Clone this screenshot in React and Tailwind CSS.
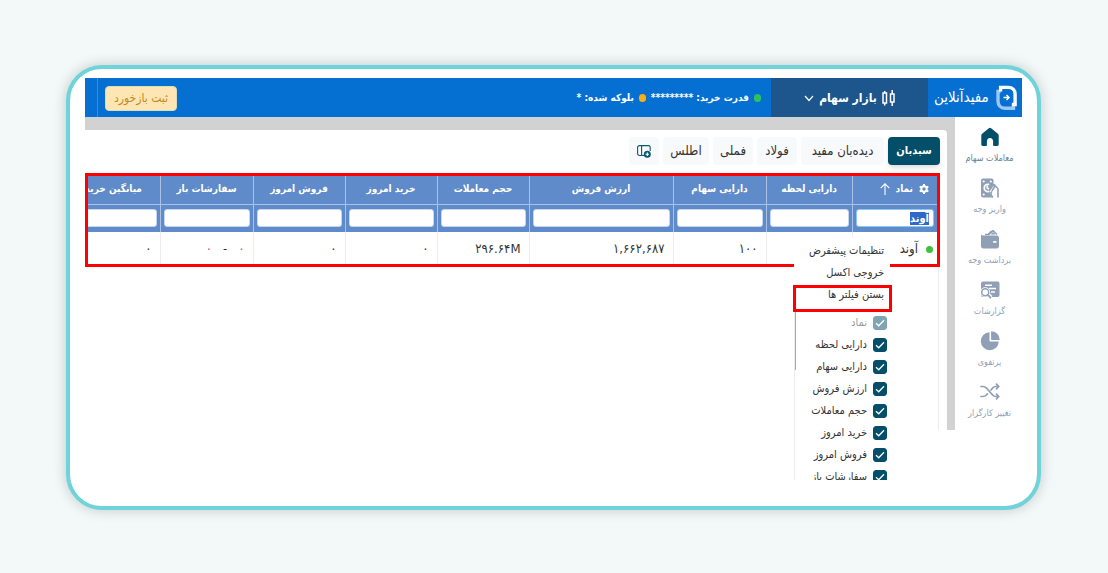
import { useEffect, useRef, useState } from 'react';

const sidebarItems = [
  { label: 'معاملات سهام', icon: 'home', active: true },
  { label: 'واریز وجه', icon: 'deposit' },
  { label: 'برداشت وجه', icon: 'wallet' },
  { label: 'گزارشات', icon: 'report' },
  { label: 'پرتفوی', icon: 'pie' },
  { label: 'تغییر کارگزار', icon: 'shuffle' }
];

const tabs = [
  { label: 'سبدبان', width: 'w-[52px]' },
  { label: 'دیده‌بان مفید', width: 'w-[83px]' },
  { label: 'فولاد', width: 'w-[40px]' },
  { label: 'فملی', width: 'w-[40px]' },
  { label: 'اطلس', width: 'w-[46px]' }
];

const columns = [
  { label: 'نماد', width: 'w-[85px]' },
  { label: 'دارایی لحظه', width: 'w-[86px]', value: '' },
  { label: 'دارایی سهام', width: 'w-[93px]', value: '۱۰۰' },
  { label: 'ارزش فروش', width: 'w-[144px]', value: '۱,۶۶۲,۶۸۷' },
  { label: 'حجم معاملات', width: 'w-[92px]', value: '۲۹۶.۶۴M' },
  { label: 'خرید امروز', width: 'w-[92px]', value: '۰' },
  { label: 'فروش امروز', width: 'w-[92px]', value: '۰' },
  { label: 'سفارشات باز', width: 'w-[93px]', orders: true },
  { label: 'میانگین خرید', width: 'w-[93px]', value: '۰' }
];

const menuColumns = [
  'نماد',
  'دارایی لحظه',
  'دارایی سهام',
  'ارزش فروش',
  'حجم معاملات',
  'خرید امروز',
  'فروش امروز',
  'سفارشات باز'
];

function SidebarIcon({ name }) {
  if (name === 'home') {
    return (
      <svg className="w-5 h-5" viewBox="0 0 20 20" fill="currentColor">
        <path d="M8.9 1.2a1.8 1.8 0 0 1 2.2 0l6.800 5.600c.5.4.8 1 .8 1.600v9.200c0 .8-.6 1.400-1.400 1.400h-3.400c-.5 0-.8-.3-.8-.8V14c0-1.700-1.300-3.100-3.100-3.100S6.900 12.300 6.900 14v4.200c0 .5-.3.800-.8.800H2.700c-.8 0-1.400-.6-1.400-1.400V8.400c0-.6.3-1.200.8-1.600z" />
      </svg>
    );
  }
  if (name === 'deposit') {
    return (
      <svg className="w-5 h-5" viewBox="0 0 20 20" fill="none">
        <rect x="1" y=".5" width="12.500" height="19" rx="2" fill="currentColor" />
        <circle cx="3.700" cy="3.500" r="1.100" fill="#fff" />
        <circle cx="10.800" cy="3.500" r="1.100" fill="#fff" />
        <circle cx="3.700" cy="16.500" r="1.100" fill="#fff" />
        <path stroke="#fff" strokeWidth="1.700" strokeLinecap="round" d="M8.500 6.400a3.600 3.600 0 1 0 .3 7M7.500 8.300c-1.200 1.500.2 1.800 1.200 2.600" />
        <path fill="#fff" d="M10 12.500l4-6.500 5 4.500V20h-6.500L10 15.500z" />
        <path stroke="currentColor" strokeWidth="1.600" strokeLinecap="round" strokeLinejoin="round" d="M9.500 12l3.800-5c.8-1 2.300.1 1.600 1.200l-2.700 4.300M14.700 7.300l2.300 2.200c.7.600 1 1.300 1 2.200V19M11.500 14c-.9 1.200-.8 2.300 0 3.400l1 1.600" />
      </svg>
    );
  }
  if (name === 'wallet') {
    return (
      <svg className="w-5 h-5" viewBox="0 0 20 20" fill="none">
        <path stroke="currentColor" strokeWidth="1.500" strokeLinejoin="round" d="M5 5.500h4l4-4 4 4M8 5.500l3.500-3.500M11.500 5.500L13 4l1.500 1.500" />
        <path fill="currentColor" d="M1 5.200c.5 1 1.500 1.300 3 1.300h12.500C18 6.500 19 7.500 19 9v8.300c0 1.200-1 2.200-2.200 2.200H3.200C2 19.500 1 18.500 1 17.300z" />
        <rect x="13" y="12" width="3.600" height="1.800" rx=".9" fill="#fff" />
      </svg>
    );
  }
  if (name === 'report') {
    return (
      <svg className="w-5 h-5" viewBox="0 0 20 20" fill="none">
        <rect x="1" y="1.500" width="18.500" height="15.500" rx="2" fill="currentColor" />
        <path stroke="#fff" strokeWidth="1.400" d="M5 5.200h7M9 8.500h7M11 12h4" />
        <circle cx="5.200" cy="12.200" r="5" fill="#fff" />
        <circle cx="5.200" cy="12.200" r="3.500" stroke="currentColor" strokeWidth="1.500" />
        <path stroke="#fff" strokeWidth="4" d="M8.500 14.900L11 17.500" />
        <path stroke="currentColor" strokeWidth="1.800" strokeLinecap="round" d="M7.900 14.800L10.500 17.700" />
      </svg>
    );
  }
  if (name === 'pie') {
    return (
      <svg className="w-5 h-5" viewBox="0 0 20 20" fill="currentColor">
        <path d="M9.500 1.200v8.300c0 .6.400 1 1 1h8.300A9 9 0 1 1 9.500 1.200z" />
        <path d="M11.700.3a8.600 8.600 0 0 1 8 8.200c0 .4-.2.600-.6.600h-7.300c-.4 0-.7-.3-.7-.7V.800c0-.3.200-.5.600-.5z" />
      </svg>
    );
  }
  return (
    <svg className="w-5 h-5" viewBox="0 0 20 20" fill="none" stroke="currentColor" strokeWidth="1.700" strokeLinecap="round" strokeLinejoin="round">
      <path d="M1 4.500h2c1.300 0 2.300.5 3.400 1.500l6.200 7c.8 1 1.800 1.500 3.100 1.500h2.800M1 14.500h2c1.300 0 2.500-.5 3.400-1.500l1-1.100M11 8l1.600-2c.8-1 1.800-1.500 3.100-1.500h2.800M16.500 2.200l2.300 2.300-2.300 2.300M16.500 12.200l2.300 2.300-2.300 2.300" />
    </svg>
  );
}

function Header() {
  return (
    <header className="flex h-[39px] bg-[#0570d1] text-white">
      <a href="#" className="flex w-[94px] items-center justify-between pr-[5px] pl-[6px]">
        <svg className="w-[21px] h-[26px]" viewBox="0 0 21 26" fill="none">
          <path stroke="#9cc7f0" strokeWidth="3.400" d="M4.500 6.500H2V16c0 4.200 2.500 7.300 7 7.300h8.500v-2.500" />
          <path stroke="#fff" strokeWidth="3.400" d="M4.600 6.500V2.400h7.600c4.200 0 6.900 2.600 6.900 6.800v10.300h-3.300" />
          <path stroke="#fff" strokeWidth="1.500" d="M7.500 12.500H13M10.500 10l2.500 2.500-2.500 2.500" />
        </svg>
        <span className="text-[15px] whitespace-nowrap">مفیدآنلاین</span>
      </a>
      <button type="button" className="flex w-[157px] items-center justify-center gap-[5px] bg-[#1d558d] text-xs font-bold">
        <svg className="w-[13px] h-4" viewBox="0 0 13 16" fill="none" stroke="currentColor" strokeWidth="1.500">
          <rect x="1" y="3" width="3.500" height="10" />
          <rect x="8.500" y="4" width="3.500" height="8" />
          <path d="M2.700 1v2M2.700 13v2.500M10.200 0v4M10.200 12v4" />
        </svg>
        <span>بازار سهام</span>
        <svg className="w-[10px] h-[10px]" viewBox="0 0 10 10" fill="none" stroke="currentColor" strokeWidth="1.200">
          <path d="M1 3l4 4.500L9 3" />
        </svg>
      </button>
      <div className="flex flex-1 items-center gap-[5px] pr-[10px] text-[10px] font-bold">
        <span className="h-2 w-[7px] rounded-full bg-[#2dc25b]" />
        <span>قدرت خرید: *********</span>
        <span className="h-2 w-[7px] rounded-full bg-[#fcb010]" />
        <span>بلوکه شده: *</span>
      </div>
      <div className="flex items-center border-l border-[#3b8bdd] pt-px pl-[7px]">
        <button type="button" className="h-[25px] w-[72px] rounded-sm border border-[#d9dcb8] bg-[#fee6b4] text-xs text-[#c28a1c]">
          ثبت بازخورد
        </button>
      </div>
      <div className="w-3" />
    </header>
  );
}

function Sidebar() {
  return (
    <nav className="w-[67px] shrink-0 pt-[7px] pl-[2px]">
      {sidebarItems.map((item) => (
        <a
          key={item.label}
          href="#"
          className={`flex h-[51px] flex-col items-center pt-[3px] ${item.active ? 'text-[#034e68]' : 'text-[#8f9fb5]'}`}
        >
          <SidebarIcon name={item.icon} />
          <span className={`mt-[3px] text-[9px] leading-[16px] whitespace-nowrap ${item.active ? 'text-[#66838f]' : ''}`}>
            {item.label}
          </span>
        </a>
      ))}
    </nav>
  );
}

function Tabs() {
  return (
    <div className="flex gap-1 pt-[7px] pr-[7px] text-xs text-[#333]">
      {tabs.map((tab, index) => (
        <button
          key={tab.label}
          type="button"
          className={`h-[28px] shrink-0 rounded-sm whitespace-nowrap ${tab.width} ${
            index === 0 ? 'bg-[#034e68] text-[11px] font-bold text-white shadow-md' : 'bg-[#f8f9fb] text-[13px]'
          }`}
        >
          {tab.label}
        </button>
      ))}
      <button type="button" aria-label="افزودن دیده‌بان" className="flex h-[28px] w-[30px] items-center justify-center rounded-sm bg-[#f8f9fb] text-[#0b5872]">
        <svg className="w-[14px] h-[13px]" viewBox="0 0 14 13" fill="none" stroke="currentColor" strokeWidth="1.100">
          <path d="M7 10.500H2.500C1.400 10.500.6 9.700.6 8.600V2.500C.6 1.400 1.400.6 2.500.6h8.800c1.100 0 1.900.8 1.900 1.900v3.500M4.600.6v9.900" />
          <circle cx="10.300" cy="9.200" r="3.500" fill="currentColor" stroke="none" />
          <path stroke="#fff" d="M10.300 7.500v3.400M8.600 9.200h3.400" />
        </svg>
      </button>
    </div>
  );
}

function ColumnMenu() {
  return (
    <div className="absolute top-[61px] right-[47px] w-[96px] bg-white text-[11px] text-[#333]">
      <ul className="h-[75px] pt-[3px]">
        <li>
          <button type="button" className="block h-[22px] w-full pr-[6px] text-right whitespace-nowrap">تنظیمات پیشفرض</button>
        </li>
        <li>
          <button type="button" className="block h-[22px] w-full pr-[6px] text-right whitespace-nowrap">خروجی اکسل</button>
        </li>
        <li className="relative">
          <button type="button" className="block h-[22px] w-full pr-[6px] text-right whitespace-nowrap">بستن فیلتر ها</button>
          <span className="absolute top-px -right-[2px] -left-px h-[27px] border-3 border-[#fe0000]" />
        </li>
      </ul>
      <ul className="relative h-[168px] overflow-hidden border-l border-[#ececec]">
        {menuColumns.map((name, index) => (
          <li key={name} className="h-[22px]">
            <label className={`flex h-full items-center gap-[6px] pr-[3px] whitespace-nowrap ${index === 0 ? 'opacity-50' : ''}`}>
              <span className="relative flex h-[14px] w-[14px] shrink-0">
                <input
                  type="checkbox"
                  defaultChecked
                  disabled={index === 0}
                  className="h-[14px] w-[14px] appearance-none rounded-[3px] border border-[#034e68] checked:bg-[#034e68]"
                />
                <svg className="pointer-events-none absolute inset-0" viewBox="0 0 14 14" fill="none" stroke="#fff" strokeWidth="1.300">
                  <path d="M3 7.200l2.700 2.600L11 4.300" />
                </svg>
              </span>
              {name}
            </label>
          </li>
        ))}
        <li className="absolute top-0 left-0 h-[58px] w-px bg-[#aaa]" />
      </ul>
    </div>
  );
}

function PortfolioTable() {
  const [symbol, setSymbol] = useState('آوند');
  const symbolRef = useRef(null);

  useEffect(() => {
    symbolRef.current?.focus();
    symbolRef.current?.select();
  }, []);

  return (
    <div className="relative mt-2 mr-[7px] border-3 border-[#fe0000]">
      <div className="overflow-hidden">
        <table className="w-[calc(100%+20px)] table-fixed border-collapse text-[#333]">
          <thead className="bg-[#5f8bca] text-white">
            <tr className="h-[28px] text-[10px]">
              {columns.map((column, index) => (
                <th key={column.label} className={`border-b border-l border-[#a9c2e6] p-0 pb-[2px] whitespace-nowrap ${column.width}`}>
                  {index === 0 ? (
                    <div className="flex items-center justify-start gap-[6px] pr-2">
                      <svg className="w-[10px] h-[10px]" viewBox="0 0 10 10" fill="none" stroke="currentColor">
                        <circle cx="5" cy="5" r="2.700" strokeWidth="2" />
                        <path strokeWidth="2" d="M5 0v2M5 8v2M.7 2.500l1.600 1M7.700 6.500l1.600 1M.7 7.500l1.600-1M7.700 3.500l1.600-1" />
                      </svg>
                      <span>{column.label}</span>
                      <svg className="w-[10px] h-3" viewBox="0 0 10 12" fill="none" stroke="currentColor" strokeWidth="1.100">
                        <path d="M5 12V1M.7 5.200L5 .9l4.300 4.300" />
                      </svg>
                    </div>
                  ) : (
                    column.label
                  )}
                </th>
              ))}
            </tr>
            <tr className="h-[28px]">
              {columns.map((column, index) => (
                <td key={column.label} className="border-l border-[#a9c2e6] px-[3px] py-0">
                  {index === 0 ? (
                    <input
                      ref={symbolRef}
                      type="text"
                      aria-label={column.label}
                      value={symbol}
                      onChange={(e) => setSymbol(e.target.value)}
                      className="block h-[18px] w-full rounded-[3px] border border-[#8ec5f7] bg-white px-1 text-[11px] font-bold text-[#333] outline-none selection:bg-[#2f68c8] selection:text-white"
                    />
                  ) : (
                    <input
                      type="text"
                      aria-label={column.label}
                      className="block h-[18px] w-full rounded-[3px] border border-[#c4d6f0] bg-white px-1 text-[11px] text-[#333] outline-none"
                    />
                  )}
                </td>
              ))}
            </tr>
          </thead>
          <tbody>
            <tr className="h-[32px] text-[13px]">
              {columns.map((column, index) => (
                <td key={column.label} className="border-l border-[#ececec] px-2 pt-[2px] pb-0 whitespace-nowrap">
                  {index === 0 && (
                    <div className="-mr-1 flex items-center gap-2">
                      <span className="h-[7px] w-[7px] rounded-full bg-[#3cc23c]" />
                      آوند
                    </div>
                  )}
                  {column.value && (
                    <div dir="ltr" className="text-right">{column.value}</div>
                  )}
                  {column.orders && (
                    <div className="flex gap-[11px]">
                      <span className="text-[#35a065]">۰</span>
                      <span>-</span>
                      <span className="text-[#e04a5a]">۰</span>
                    </div>
                  )}
                </td>
              ))}
            </tr>
          </tbody>
        </table>
      </div>
      <ColumnMenu />
    </div>
  );
}

export default function App() {
  return (
    <div
      dir="rtl"
      className="flex min-h-screen bg-[#f3f9f9] pt-[65px] pr-[67px] pb-[63px] pl-[66px] font-['DejaVu_Sans_Condensed','DejaVu_Sans',sans-serif]"
    >
      <div className="min-w-0 flex-1 rounded-[36px] border-4 border-[#6fd3da] bg-white px-[15px] pt-[9px] shadow-[0_0_14px_rgba(0,0,0,0.2)]">
        <Header />
        <div className="flex">
          <Sidebar />
          <main className="min-w-0 flex-1 bg-[#d2d2d2] pt-[13px] pr-2">
            <div className="flex h-full flex-col rounded-tr-sm bg-white">
              <Tabs />
              <PortfolioTable />
              <div className="mr-2 flex-1 border-r border-[#ececec]" />
            </div>
          </main>
        </div>
      </div>
    </div>
  );
}
